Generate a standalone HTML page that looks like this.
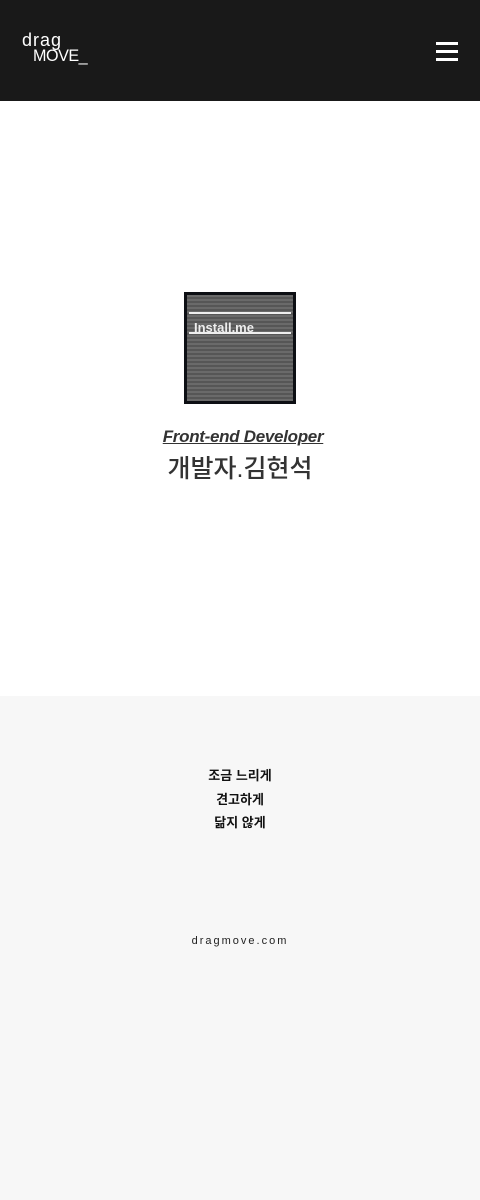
<!DOCTYPE html>
<html><head><meta charset="utf-8"><style>
*{margin:0;padding:0;box-sizing:border-box}
body{width:480px;height:1200px;background:#f7f7f7;font-family:"Liberation Sans","Noto Sans CJK KR",sans-serif;overflow:hidden}
header{height:101px;background:#191919;position:relative}
.logo{position:absolute;left:22px;top:33px;color:#fff;font-size:18px;line-height:15px;font-weight:300}
.logo .a{letter-spacing:1px}
.logo .b{display:inline-block;margin-left:11px;font-size:17px;letter-spacing:-0.5px;transform:scaleX(0.95);transform-origin:left}
.burger{position:absolute;left:436px;top:42px;width:22px}
.burger i{display:block;height:3px;background:#fff;margin-bottom:5px}
main{height:595px;background:#fff;position:relative}
.img{position:absolute;left:184px;top:191px;width:112px;height:112px;background:#0d0f14;padding:3px}
.scr{width:100%;height:100%;background:repeating-linear-gradient(#6a6a6a 0 2px,#565656 2px 4px);position:relative}
.ln{position:absolute;left:2px;right:2px;height:2px;background:#eee}
.it{position:absolute;left:7px;top:25px;color:#eee;font-weight:bold;font-size:13px}
.t1{position:absolute;top:326px;width:100%;text-align:center;font-style:italic;font-weight:bold;font-size:17px;color:#333;text-decoration:underline;padding-left:6px;letter-spacing:-0.3px}
.t2{position:absolute;top:348px;width:100%;text-align:center;font-size:25px;font-weight:500;color:#333}
.foot{text-align:center;font-size:13px;font-weight:bold;color:#111;line-height:23.5px;padding-top:68px}
.url{text-align:center;font-size:11px;letter-spacing:2px;color:#222;margin-top:100px}
</style></head><body>
<header><div class="logo"><span class="a">drag</span><br><span class="b">MOVE_</span></div>
<div class="burger"><i></i><i></i><i></i></div></header>
<main>
<div class="img"><div class="scr"><div class="ln" style="top:17px"></div><div class="ln" style="top:37px"></div><div class="it">Install.me</div></div></div>
<div class="t1">Front-end Developer</div>
<div class="t2">개발자.김현석</div>
</main>
<div class="foot">조금 느리게<br>견고하게<br>닮지 않게</div>
<div class="url">dragmove.com</div>
</body></html>
